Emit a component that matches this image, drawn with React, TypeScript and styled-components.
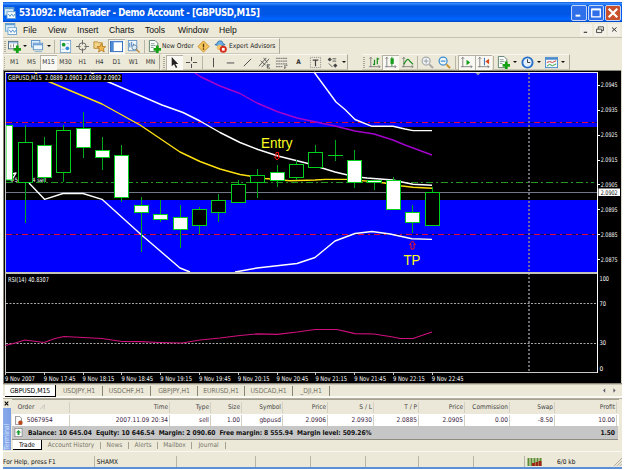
import React from "react";
import styled, { createGlobalStyle } from "styled-components";

const GlobalStyle = createGlobalStyle`
  body {
    margin: 0;
    background: #fff;
    overflow: hidden;
  }
  * {
    box-sizing: border-box;
  }
`;

const Frame = styled.div`
  width: 625px;
  height: 470px;
  padding: 2px 3px 1px;
  background: #fff;
  font-family: "DejaVu Sans Condensed", "DejaVu Sans", sans-serif;
  font-size: 6.5px;
  color: #111;
  white-space: pre;
`;

const Window = styled.div`
  display: flex;
  flex-direction: column;
  width: 619px;
  height: 467px;
  background: #ece9d8;
`;

const TitleBar = styled.div`
  display: flex;
  align-items: center;
  height: 20px;
  padding: 1px 1px 0 1px;
  background: linear-gradient(#0a5be0 0%, #3a8cff 8%, #0058e6 20%, #0055e5 60%, #0066ff 88%, #0043c0 100%);
`;

const Title = styled.h1`
  flex: 1;
  margin: 0 0 0 3px;
  font-size: 9.6px;
  letter-spacing: -0.4px;
  font-weight: bold;
  color: #fff;
`;

const CaptionButton = styled.div<{ $close?: boolean }>`
  display: flex;
  align-items: center;
  justify-content: center;
  width: 16px;
  height: 16px;
  margin-left: 1px;
  border: 1px solid #c4d6f8;
  border-radius: 2px;
  background: ${(p) => (p.$close ? "#c8512b" : "#2f6fea")};
`;

const MenuBar = styled.div`
  display: flex;
  align-items: center;
  height: 16px;
  padding: 0 2px;
  border-bottom: 1px solid #c5c2b4;
  font-family: "Liberation Sans", sans-serif;
  font-size: 8.6px;
`;

const MenuItem = styled.span<{ $w: number }>`
  width: ${(p) => p.$w}px;
`;

const MdiButton = styled.div`
  display: flex;
  align-items: center;
  justify-content: center;
  width: 12px;
  height: 12px;
  margin-left: 2px;
  background: #f4f2e8;
`;

const Bars = styled.div`
  display: flex;
  height: 16px;
`;

const ToolGroup = styled.div<{ $w: number; $ml?: number }>`
  display: flex;
  align-items: center;
  width: ${(p) => p.$w}px;
  margin-left: ${(p) => p.$ml || 0}px;
  height: 16px;
  border-top: 1px solid #f8f7f0;
  border-right: 1px solid #aca899;
  border-bottom: 1px solid #cbc8ba;
`;

const Grip = styled.i`
  width: 2px;
  height: 11px;
  margin: 0 1px;
  background: repeating-linear-gradient(#aca899 0 1px, #ece9d8 1px 2px);
`;

const Sep = styled.i<{ $m?: number }>`
  width: 1px;
  height: 13px;
  margin: 0 ${(p) => p.$m ?? 2}px;
  background: #b8b5a6;
`;

const Tool = styled.div<{ $w?: number; $on?: boolean }>`
  display: flex;
  flex: none;
  align-items: center;
  justify-content: center;
  width: ${(p) => p.$w || 17}px;
  height: 15px;
  color: #333;
  background: ${(p) => (p.$on ? "#f9f8f3" : "none")};
  box-shadow: ${(p) => (p.$on ? "inset 1px 1px #b5b2a4" : "none")};
`;

const ToolText = styled.span<{ $w: number }>`
  flex: none;
  width: ${(p) => p.$w}px;
  font-size: 6.6px;
  color: #222;
`;

const Caret = styled.i`
  width: 0;
  height: 0;
  border: 2px solid transparent;
  border-top: 2.5px solid #111;
  border-bottom: 0;
`;

const ChartSvg = styled.svg`
  display: block;
  flex: none;
  font-family: "DejaVu Sans Condensed", "DejaVu Sans", sans-serif;
`;

const ChartTabs = styled.div`
  display: flex;
  height: 16px;
  padding: 1px 8px 0 2px;
  border-top: 1px solid #8a8778;
  border-bottom: 1px solid #b4b1a1;
  background: linear-gradient(#c8c5b7 0 1px, #ece9d8 1px 12px, #faf9f2 12px);
  font-size: 6.8px;
  letter-spacing: -0.05px;
  color: #77746a;
`;

const ChartTab = styled.div<{ $w: number; $active?: boolean }>`
  display: flex;
  align-items: center;
  justify-content: center;
  width: ${(p) => p.$w}px;
  height: ${(p) => (p.$active ? 12 : 10)}px;
  color: ${(p) => (p.$active ? "#000" : "inherit")};
  background: ${(p) => (p.$active ? "#fff" : "none")};
  border-right: 1px solid ${(p) => (p.$active ? "#000" : "#8a8778")};
  border-bottom: ${(p) => (p.$active ? "1px solid #000" : "none")};
  margin-top: ${(p) => (p.$active ? 0 : 1)}px;
`;

const Scroll = styled.div`
  display: flex;
  gap: 5px;
  margin: 3px -3px 0 auto;
`;

const Terminal = styled.div`
  display: flex;
  height: 52px;
`;

const Side = styled.div`
  display: flex;
  flex-direction: column;
  width: 9px;
`;

const Close = styled.div`
  height: 9px;
  padding: 2px 0 0 1px;
  line-height: 0;
`;

const SideLabel = styled.div`
  flex: 1;
  width: 8px;
  margin-bottom: 1px;
  background: linear-gradient(90deg, #7b9fe6, #89a9ea);
  color: #d3e0fb;
  font-size: 7px;
  line-height: 8px;
  writing-mode: vertical-rl;
  transform: rotate(180deg);
`;

const Panel = styled.div`
  flex: 1;
`;

const Row = styled.div<{ $head?: boolean }>`
  display: flex;
  align-items: center;
  height: ${(p) => (p.$head ? 15 : 12)}px;
  border-top: ${(p) => (p.$head ? "1px solid #a5a294" : "none")};
  background: ${(p) => (p.$head ? "#ebe8d9" : "#fff")};
  color: ${(p) => (p.$head ? "#444" : "#3a1a3c")};
  margin-right: 3px;
`;

const Cell = styled.div<{ $w: number; $left?: boolean }>`
  display: flex;
  align-items: center;
  justify-content: ${(p) => (p.$left ? "flex-start" : "flex-end")};
  width: ${(p) => p.$w}px;
  height: 11px;
  padding: 0 1px 0 2px;
  border-right: 1px solid #d4d1c3;
`;

const Balance = styled.div`
  display: flex;
  align-items: center;
  height: 14px;
  margin-right: 4px;
  padding: 0 3px 0 2px;
  background: #c6c6c6;
  border-bottom: 1px solid #8f8d82;
  font-weight: bold;
  font-size: 6.7px;
  letter-spacing: -0.06px;
`;

const BalanceText = styled.span`
  flex: 1;
  margin-left: 3px;
`;

const BottomTabs = styled.div`
  display: flex;
  height: 11px;
  padding-left: 1px;
  color: #77746a;
`;

const BottomTab = styled.div<{ $w: number; $active?: boolean }>`
  display: flex;
  align-items: center;
  justify-content: center;
  width: ${(p) => p.$w}px;
  height: ${(p) => (p.$active ? 10 : 7)}px;
  margin-top: ${(p) => (p.$active ? 0 : 1.5)}px;
  color: ${(p) => (p.$active ? "#000" : "inherit")};
  background: ${(p) => (p.$active ? "#fff" : "none")};
  border-right: 1px solid ${(p) => (p.$active ? "#000" : "#a5a294")};
  border-bottom: ${(p) => (p.$active ? "1px solid #000" : "none")};
`;

const StatusBar = styled.div`
  display: flex;
  align-items: center;
  height: 16px;
  padding-top: 4px;
  border-top: 1px solid #f8f7f0;
`;

const StatusCell = styled.div<{ $w: number; $line?: boolean }>`
  display: flex;
  align-items: center;
  width: ${(p) => p.$w}px;
  height: 11px;
  border-right: ${(p) => (p.$line === false ? "none" : "1px solid #b8b5a6")};
`;

const BottomEdge = styled.div`
  height: 2px;
  background: #5b8fd8;
`;

const Ico = ({ children, size = 13 }: { children: React.ReactNode; size?: number }) => (
  <svg width={size} height={size} viewBox="0 0 14 14" fill="none">
    {children}
  </svg>
);

const AppLogo = () => (
  <Ico size={12}>
    <rect x="0.5" y="0.5" width="11" height="9" fill="#d6eafa" stroke="#5d9cd0" />
    <rect x="0.5" y="0.5" width="11" height="2" fill="#5d9cd0" />
    <rect x="3.5" y="5.5" width="10" height="8" fill="#fff" stroke="#5d9cd0" />
    <path d="M5 8l2 3 2-3 2 3 2-3" stroke="#3c86c4" />
  </Ico>
);

const plus = <path d="M10 6v8M6 10h8" stroke="#14a214" strokeWidth="3" />;

const NewChart = () => (
  <Ico>
    <rect x="0.5" y="1.5" width="10" height="8" fill="#fff" stroke="#4d6b8a" />
    <path d="M1 3h9" stroke="#6fa2d8" />
    <path d="M3 8V5M6 8V4" stroke="#888" />
    {plus}
  </Ico>
);

const Profiles = () => (
  <Ico>
    <rect x="0.5" y="0.5" width="9" height="7" fill="#dcecfb" stroke="#5c93c9" />
    <rect x="2.5" y="3.5" width="10" height="7" fill="#eef6fd" stroke="#5c93c9" />
    <path d="M3 5h9" stroke="#6fa2d8" strokeWidth="1.5" />
    <path d="M4 12.5h8" stroke="#8fb0d0" />
  </Ico>
);

const MarketWatch = () => (
  <Ico>
    <rect x="1.5" y="0.5" width="11" height="13" fill="#f5fbff" stroke="#7ba7d0" />
    <circle cx="5" cy="5" r="2" fill="#1a9a2a" />
    <circle cx="9" cy="9" r="2" fill="#3b8cd8" />
    <path d="M8 4h3M3 10h3" stroke="#a9c9e6" />
  </Ico>
);

const Target = () => (
  <Ico>
    <circle cx="7" cy="7" r="4" stroke="#666" />
    <path d="M7 0v5M7 9v5M0 7h5M9 7h5" stroke="#666" />
  </Ico>
);

const FolderStar = () => (
  <Ico>
    <path d="M1 2h4l1 1h4v6H1z" fill="#f4d488" stroke="#b98b35" />
    <path d="M9 4l1.3 3 3.4.3-2.5 2 .8 3.7-3-2-3 2 .8-3.7-2.5-2 3.4-.3z" fill="#f5b949" stroke="#a8701c" strokeWidth=".8" />
  </Ico>
);

const NavPanel = () => (
  <Ico>
    <rect x="0.5" y="1.5" width="13" height="11" fill="#fff" stroke="#2c67b5" />
    <path d="M1 2h12" stroke="#4d8bd8" />
    <rect x="1" y="2" width="3" height="10" fill="#4d8bd8" />
  </Ico>
);

const Tester = () => (
  <Ico>
    <rect x="1.5" y="0.5" width="9" height="11" fill="#eef5fc" stroke="#6c9ac8" />
    <path d="M3 3v5M5 2v5M7 4v3" stroke="#417db8" />
    <circle cx="8" cy="8" r="2.7" fill="#dcecfa" stroke="#5f7f9f" />
    <path d="M10 10l3.5 3.5" stroke="#c08a3a" strokeWidth="1.5" />
  </Ico>
);

const OrderIcon = () => (
  <Ico>
    <path d="M1.5.5h6l3 3v9h-9z" fill="#fff" stroke="#5c7d6c" />
    <path d="M3 4h4M3 6h5M3 8h3" stroke="#7c9a8c" />
    {plus}
  </Ico>
);

const Diamond = () => (
  <Ico>
    <path d="M7 1l6 6-6 6-6-6z" fill="#f8c860" stroke="#c98a26" />
    <path d="M7 4v4M7 9v1.5" stroke="#5b3b05" strokeWidth="1.5" />
  </Ico>
);

const Expert = () => (
  <Ico>
    <path d="M1 5q5 3 11 0l-2-1q-1-4-4-3-2 0-3 3z" fill="#6baee6" stroke="#3674ab" />
    <circle cx="6" cy="8" r="3" fill="#f0c46c" />
    <circle cx="10" cy="10" r="3.8" fill="#d52c1a" />
    <rect x="8.5" y="8.5" width="3" height="3" fill="#fff" />
  </Ico>
);

const axis = <path d="M3 1v11M1.5 3L3 1.5 4.500 3M1 11.5h12M11.500 10l1.500 1.500-1.500 1.500" stroke="#777" strokeWidth=".9" />;

const Magnifier = ({ color, inside }: { color: string; inside: string }) => (
  <Ico>
    <circle cx="5.5" cy="5.5" r="4.300" fill="#eef6fc" stroke={color} strokeWidth="1.3" />
    <path d={inside} stroke={color} strokeWidth="1.3" />
    <path d="M9 9l4 4" stroke={color === "#aaa" ? "#aaa" : "#c9962f"} strokeWidth="2.2" />
  </Ico>
);

const tabs: [string, number][] = [
  ["USDJPY,H1", 47],
  ["USDCHF,H1", 48],
  ["GBPJPY,H1", 47],
  ["EURUSD,H1", 47],
  ["USDCAD,H1", 48],
  ["_DJI,H1", 37],
];

const columns: [string, string, number][] = [
  ["Time", "2007.11.09 20:34", 100],
  ["Type", "sell", 41],
  ["Size", "1.00", 31],
  ["Symbol", "gbpusd", 41],
  ["Price", "2.0906", 45],
  ["S / L", "2.0930", 46],
  ["T / P", "2.0885", 45],
  ["Price", "2.0905", 46],
  ["Commission", "0.00", 45],
  ["Swap", "-8.50", 45],
  ["Profit", "10.00", 62],
];

// x, body top, body bottom, high, low, filled
const candles: [number, number, number, number, number, boolean][] = [
  [25, 142.5, 182.5, 125, 223, false],
  [44.5, 145.5, 177.5, 137, 183, true],
  [63.5, 130.5, 172.5, 125, 182, false],
  [83.5, 128.5, 147.5, 112, 158, true],
  [102.5, 150.5, 157.5, 137, 170, true],
  [121.5, 155.5, 197.5, 145, 202, true],
  [141.5, 205.5, 212.5, 197, 252, true],
  [160.5, 214.5, 219.5, 200, 222, true],
  [180.5, 217.5, 229.5, 205, 248, true],
  [199.5, 209.5, 225.5, 207, 234, false],
  [218.5, 200.5, 212.5, 194, 222, false],
  [238.5, 184.5, 202.5, 180, 202, false],
  [257.5, 175.5, 182.5, 169, 198, false],
  [277, 172.5, 180.5, 165, 187, true],
  [296.5, 164.5, 177.5, 160, 180, false],
  [315.5, 152.5, 167.5, 145, 167, false],
  [335.5, 155.5, 155.5, 140, 161, true],
  [354.5, 160.5, 182.5, 150, 188, true],
  [374.5, 180.5, 182.5, 180, 190, true],
  [393.5, 180.5, 209.5, 177, 209, true],
  [412.5, 212.5, 222.5, 205, 233, true],
  [432, 192.5, 225.5, 187, 225, false],
];

const prices: [string, number][] = [
  ["2.0945", 85],
  ["2.0935", 110],
  ["2.0925", 135],
  ["2.0915", 160],
  ["2.0905", 184.5],
  ["2.0895", 209.5],
  ["2.0885", 234.5],
  ["2.0875", 259.5],
];

const times = ["2007", "17:45", "18:15", "18:45", "19:15", "19:45", "20:15", "20:45", "21:15", "21:45", "22:15", "22:45"];

const Chart = () => (
  <ChartSvg width="619" height="313" viewBox="3 70 619 313" fill="none">
    <rect x="3" y="70" width="619" height="313" fill="#000" />
    <path d="M3 70.5H622M3.5 70V383" stroke="#8a8778" />
    <path d="M621.5 70V383" stroke="#d8d5c6" />
    <rect x="6" y="73" width="591" height="54" fill="#0000ff" />
    <rect x="6" y="200" width="591" height="72" fill="#0000ff" />

    <path d="M6 192.5H598" stroke="#70788a" />
    <path d="M6 182.5H594" stroke="#229a22" strokeDasharray="7 3 2 3" />
    {[122.5, 234.5].map((y) => (
      <g key={y}>
        <path d={`M6 ${y}H597`} stroke="#100070" />
        <path d={`M6 ${y}H597`} stroke="#e00838" strokeDasharray="6 4 2 4" />
      </g>
    ))}
    <path d="M529 73V372" stroke="#85858c" strokeWidth="1.6" strokeDasharray="2 2" />

    <g strokeWidth="1.4" strokeLinejoin="round">
      <path d="M34 72L45 80L102 104L140 125L180 152L200 161.5L220 169L240 174.5L265 178.5L290 180.7L315 180L325 179.4H347L380 182.3L400 185.7L413 187.3L432 188.3" stroke="#ffe010" />
      <path d="M90 72L105 80.5L140 95.5L162 105L183 112.5L200 121L220 132.5L240 142.5L258 149.5L278 156L308 163.5L322 168L335 172L355 176.7L367 178L393 180L402 182L413 184.3L432 185.3" stroke="#fff" />
      <path d="M314 72L336 102L345 109.5L355 119.5L372 126.3H393L405 129L413 130.6H432" stroke="#fff" />
      <path d="M195 73L200 76.5L220 86L240 93.5L257 103L277 111.5L297 118L335 126L355 131L374 134L393 140L405 145L432 155" stroke="#a400cc" />
      <path d="M12 174L16 173L13 178M29 183L44.5 199.3L63 193.5H83L102 199.3L141 234.5L180 268L190 272" stroke="#fff" />
      <path d="M235 272L257 268L297 263.5L315 257.5L335 241L355 233.5L372 231.5L390 234L412 238.7L432 239.4" stroke="#fff" />
    </g>
    <text x="10" y="182" fontSize="6" fill="#fff">#50</text>
    <text x="32" y="182" fontSize="6" fill="#fff">4 sell</text>

    <path d="M5.5 103V125" stroke="#00b414" />
    <rect x="6" y="125.5" width="6.5" height="54.5" fill="#fff" stroke="#00e01c" />
    {candles.map(([x, top, bottom, high, low, filled]) => (
      <g key={x} stroke="#00d01c">
        <path d={`M${Math.floor(x) + 0.5} ${high}V${low}`} stroke="#00a81c" />
        {top === bottom ? (
          <path d={`M${Math.floor(x) - 7} ${top}h15`} />
        ) : (
          <rect x={Math.floor(x) - 6.5} y={top} width="14" height={bottom - top} fill={filled ? "#fff" : "#000"} />
        )}
      </g>
    ))}

    <path d="M277 160l-2.5-3h1.500v-4.500h2.500v4.500h1.500z" stroke="#f01010" />
    <path d="M412.5 241l-3 3.5h1.500v4.500h3v-4.500h1.500z" stroke="#f01028" />
    <text x="261" y="148.3" fontFamily="Liberation Sans" fontSize="14.3" textLength="31.5" lengthAdjust="spacingAndGlyphs" fill="#ffff20">Entry</text>
    <text x="403.5" y="264.8" fontFamily="Liberation Sans" fontSize="14.3" textLength="17" lengthAdjust="spacingAndGlyphs" fill="#ffff20">TP</text>

    <rect x="7" y="74" width="115" height="8" fill="#000" />
    <text x="8" y="80" fontSize="6.6" textLength="113" lengthAdjust="spacingAndGlyphs" xmlSpace="preserve" fill="#fff">GBPUSD,M15  2.0889 2.0903 2.0889 2.0902</text>
    <path d="M475.5 73h5l-2.5 2.5z" fill="#8c96a8" />

    <path d="M5 72.5H598" stroke="#eef" />
    <path d="M5.5 72V372" stroke="#c8c8c8" />
    <rect x="5" y="272" width="593" height="2" fill="#c4c4b8" />
    <path d="M5 372.5H598" stroke="#c8c8c8" />
    <path d="M597.5 72V373" stroke="#fff" />

    <path d="M6 303.5H597M6 343.5H597" stroke="#a8a8a8" strokeDasharray="2 1.5" />
    <path d="M5.5 345.5L15 343L25 340L44 342.5L55 338.5L64 336.5L83 337.5L102 338.5L122 341.5L140 341.7L160 342.5L182 343L200 340L220 338L240 335.5L258 333.8L277 334.3L297 332L315 329.5H337L355 333.7L374 334L393 337L400 338.5H413L432 332" stroke="#d0107c" strokeWidth="1.2" />
    <text x="8" y="282" fontSize="6.6" textLength="41" lengthAdjust="spacingAndGlyphs" fill="#fff">RSI(14) 40.8307</text>

    {prices.map(([label, y]) => (
      <g key={label}>
        <path d={`M598 ${Math.floor(y) + 0.5}h2`} stroke="#fff" />
        <text x="600.7" y={y + 2.4} fontSize="6.3" textLength="17" lengthAdjust="spacingAndGlyphs" fill="#fff">{label}</text>
      </g>
    ))}
    <rect x="598.5" y="188.5" width="21.5" height="7.5" fill="#fff" />
    <text x="600.7" y="194.8" fontSize="6.3" textLength="17" lengthAdjust="spacingAndGlyphs" fill="#000">2.0902</text>
    <g fontSize="6.5" fill="#fff">
      <text x="599.5" y="280.5" textLength="9.5" lengthAdjust="spacingAndGlyphs">100</text>
      <text x="599.5" y="305.5" textLength="6.500" lengthAdjust="spacingAndGlyphs">70</text>
      <text x="599.5" y="345" textLength="6.500" lengthAdjust="spacingAndGlyphs">30</text>
      <text x="599.5" y="371">0</text>
    </g>
    {times.map((t, i) => (
      <g key={t}>
        <path d={`M${Math.round(5 + i * 38.8) + 0.5} 372v3`} stroke="#c8c8c8" />
        <text x={5 + i * 38.8} y="380.7" fontSize="6.5" textLength={i ? 31.8 : 29.8} lengthAdjust="spacingAndGlyphs" fill="#fff">{`9 Nov ${t}`}</text>
      </g>
    ))}
  </ChartSvg>
);

const App = () => (
  <>
    <GlobalStyle />
    <Frame>
      <Window>
        <TitleBar>
          <AppLogo />
          <Title>531092: MetaTrader - Demo Account - [GBPUSD,M15]</Title>
          <CaptionButton>
            <Ico size={11}><path d="M2 11h6" stroke="#fff" strokeWidth="2.5" /></Ico>
          </CaptionButton>
          <CaptionButton>
            <Ico size={12}>
              <rect x="2" y="2.5" width="10" height="9" stroke="#fff" strokeWidth="1.5" />
              <path d="M2 3h10" stroke="#fff" strokeWidth="2" />
            </Ico>
          </CaptionButton>
          <CaptionButton $close>
            <Ico size={12}><path d="M2 2l10 10M12 2L2 12" stroke="#fff" strokeWidth="2.5" /></Ico>
          </CaptionButton>
        </TitleBar>

        <MenuBar>
          <MenuItem $w={18}><AppLogo /></MenuItem>
          <MenuItem $w={25}>File</MenuItem>
          <MenuItem $w={29}>View</MenuItem>
          <MenuItem $w={32}>Insert</MenuItem>
          <MenuItem $w={36}>Charts</MenuItem>
          <MenuItem $w={33}>Tools</MenuItem>
          <MenuItem $w={41}>Window</MenuItem>
          <MenuItem $w={359}>Help</MenuItem>
          <MdiButton><Ico size={8}><path d="M3 11h6" stroke="#333" strokeWidth="2" /></Ico></MdiButton>
          <MdiButton>
            <Ico size={8}><path d="M4 5V1.5h9V8h-3M1 5.5h9v6H1z" stroke="#333" strokeWidth="1.5" /></Ico>
          </MdiButton>
          <MdiButton><Ico size={7}><path d="M2 3l9 8M11 3L2 11" stroke="#333" strokeWidth="2" /></Ico></MdiButton>
        </MenuBar>

        <Bars>
          <ToolGroup $w={277}>
            <Grip />
            <Tool $w={15}><NewChart /></Tool>
            <Tool $w={6}><Caret /></Tool>
            <Tool $w={18}><Profiles /></Tool>
            <Tool $w={6}><Caret /></Tool>
            <Sep />
            <Tool><MarketWatch /></Tool>
            <Tool><Target /></Tool>
            <Tool><FolderStar /></Tool>
            <Tool $on><NavPanel /></Tool>
            <Tool><Tester /></Tool>
            <Sep />
            <Tool $w={15}><OrderIcon /></Tool>
            <ToolText $w={33}>New Order</ToolText>
            <Tool><Diamond /></Tool>
            <Tool $w={17}><Expert /></Tool>
            <ToolText $w={48}>Expert Advisors</ToolText>
          </ToolGroup>
        </Bars>

        <Bars>
          <ToolGroup $w={157}>
            <Grip />
            {["M1", "M5", "M15", "M30", "H1", "H4", "D1", "W1", "MN"].map((p) => (
              <Tool key={p} $on={p === "M15"}>{p}</Tool>
            ))}
          </ToolGroup>
          <ToolGroup $w={186} $ml={2}>
            <Grip />
            <Tool $on><Ico><path d="M4 1v10l2.5-2 2 4 1.5-1-2-3.5h3z" fill="#222" /></Ico></Tool>
            <Tool><Ico><path d="M7 1v4.5M7 8.5V13M1 7h4.5M8.5 7H13" stroke="#444" /></Ico></Tool>
            <Sep />
            <Tool><Ico><path d="M7 2v10" stroke="#444" /></Ico></Tool>
            <Tool><Ico><path d="M3 7.5h8" stroke="#444" /></Ico></Tool>
            <Tool><Ico><path d="M3 11l8-8" stroke="#444" /></Ico></Tool>
            <Tool>
              <Ico><path d="M1 11l8-9M4 12l8-9M3 5l5 5M6 2l4 5M10 9.5h3M10 11h2M10 13h3M10 9v4" stroke="#555" /></Ico>
            </Tool>
            <Tool>
              <Ico><path d="M1 2.5h12M1 5.5h12M1 8.5h12M1 11.5h7M10.5 14v-4h3M10 12h2" stroke="#666" strokeDasharray="2 .5" /></Ico>
            </Tool>
            <Tool><b>A</b></Tool>
            <Tool>
              <Ico>
                <rect x="1.5" y="1.5" width="11" height="11" stroke="#888" strokeDasharray="1 1" />
                <path d="M4 4.5h6M7 4v7" stroke="#444" strokeWidth="1.3" />
              </Ico>
            </Tool>
            <Tool>
              <Ico>
                <path d="M4 1.5l2.300 2.300L4 6 1.700 3.800zM10 8l2.300 2.300L10 12.600 7.700 10.300z" fill="#444" />
                <path d="M3 8l4 4M7 3h4M7 5.500h4" stroke="#555" />
              </Ico>
            </Tool>
            <Tool $w={5}><Caret /></Tool>
          </ToolGroup>
          <ToolGroup $w={208} $ml={14}>
            <Grip />
            <Tool $w={16}><Ico>{axis}<path d="M7 4v6M10 2v7M7 9H5.500M10 3h2" stroke="#168c1a" strokeWidth="1.3" /></Ico></Tool>
            <Tool $on><Ico>{axis}<path d="M8.5 1v10" stroke="#168c1a" /><rect x="7" y="2.500" width="3.5" height="6" fill="#169c1a" /></Ico></Tool>
            <Tool><Ico>{axis}<path d="M3 9q4-8 6-4l4 4" stroke="#168c1a" strokeWidth="1.3" /></Ico></Tool>
            <Sep $m={1} />
            <Tool><Magnifier color="#aaa" inside="M3 5.5h5M5.5 3v5" /></Tool>
            <Tool><Magnifier color="#3c8ccc" inside="M3 5.5h5" /></Tool>
            <Sep />
            <Tool $on><Ico>{axis}<path d="M7 4l4 3-4 3z" fill="#16a01a" /></Ico></Tool>
            <Tool $on><Ico>{axis}<path d="M8 2v8" stroke="#2864b4" /><path d="M13 3v6L9 6z" fill="#d84818" /></Ico></Tool>
            <Sep $m={1} />
            <Tool><OrderIcon /></Tool>
            <Tool $w={6}><Caret /></Tool>
            <Tool $w={18}>
              <Ico><circle cx="7" cy="7" r="5.5" fill="#e4f1fd" stroke="#2a6fc8" strokeWidth="2" /><path d="M7 3.5V7h3" stroke="#333" /></Ico>
            </Tool>
            <Tool $w={6}><Caret /></Tool>
            <Tool $w={18}>
              <Ico>
                <rect x="0.5" y="1.5" width="13" height="11" fill="#f2f8fe" stroke="#4a8acb" />
                <path d="M1 3h12" stroke="#4a8acb" strokeWidth="2" />
                <path d="M2 7l3-1 3 1 4-2" stroke="#c8402c" />
                <path d="M2 11l3-2 3 1.5 4-2" stroke="#2a9c38" />
              </Ico>
            </Tool>
            <Tool $w={6}><Caret /></Tool>
          </ToolGroup>
        </Bars>

        <Chart />

        <ChartTabs>
          <ChartTab $w={51} $active>GBPUSD,M15</ChartTab>
          {tabs.map(([label, w]) => (
            <ChartTab key={label} $w={w}>{label}</ChartTab>
          ))}
          <Scroll>
            <Ico size={5}><path d="M9 1v12L3 7z" fill="#556" /></Ico>
            <Ico size={5}><path d="M4 1v12l6-6z" fill="#556" /></Ico>
          </Scroll>
        </ChartTabs>

        <Terminal>
          <Side>
            <Close><Ico size={5}><path d="M2 2l10 10M12 2L2 12" stroke="#000" strokeWidth="3" /></Ico></Close>
            <SideLabel>Terminal</SideLabel>
          </Side>
          <Panel>
            <Row $head>
              <Cell $w={58} $left>{"  Order   "}<Ico size={6}><path d="M1 12L10 2v10" stroke="#999" /></Ico></Cell>
              {columns.map(([head, , w], i) => (
                <Cell key={i} $w={w}>{head}</Cell>
              ))}
            </Row>
            <Row>
              <Cell $w={58} $left>
                <Ico size={9}>
                  <path d="M2.5.5h6l3 3v10h-9z" fill="#fff" stroke="#555" />
                  <circle cx="10" cy="10.5" r="3.5" fill="#b8481c" />
                </Ico>
                {"  5067954"}
              </Cell>
              {columns.map(([, value, w], i) => (
                <Cell key={i} $w={w}>{value}</Cell>
              ))}
            </Row>
            <Balance>
              <Ico size={9}>
                <rect x="1.5" y=".5" width="11" height="13" fill="#fff" stroke="#777" />
                <path d="M7 3l4 4H8.5v4h-3V7H3z" fill="#1c9c2c" />
              </Ico>
              <BalanceText>{" Balance: 10 645.04  Equity: 10 646.54  Margin: 2 090.60  Free margin: 8 555.94  Margin level: 509.26%"}</BalanceText>
              1.50
            </Balance>
            <BottomTabs>
              <BottomTab $w={29} $active>Trade</BottomTab>
              <BottomTab $w={59}>Account History</BottomTab>
              <BottomTab $w={28}>News</BottomTab>
              <BottomTab $w={29}>Alerts</BottomTab>
              <BottomTab $w={34}>Mailbox</BottomTab>
              <BottomTab $w={34}>Journal</BottomTab>
            </BottomTabs>
          </Panel>
        </Terminal>

        <StatusBar>
          <StatusCell $w={92}>For Help, press F1</StatusCell>
          <StatusCell $w={82}>{" SHAMX"}</StatusCell>
          <StatusCell $w={79} />
          <StatusCell $w={55} />
          <StatusCell $w={55} />
          <StatusCell $w={53} />
          <StatusCell $w={55} />
          <StatusCell $w={51} />
          <StatusCell $w={32} $line={false}>
            <svg width="17" height="8">
              <path d="M3.500 0v8M6.500 0v8M9.500 0v8M12.500 0v8M15.500 0v8" stroke="#5c8c32" strokeWidth="2" />
              <path d="M7 5h3v3h-3zM10.500 4h2.500v4h-2.500zM13.500 3h3v5h-3z" fill="#a02818" />
            </svg>
          </StatusCell>
          <StatusCell $w={57} $line={false}>6/0 kb</StatusCell>
          <Ico size={8}><path d="M0 14L14 0M5 14l9-9M10 14l4-4" stroke="#a5a294" strokeWidth="1.5" /></Ico>
        </StatusBar>
        <BottomEdge />
      </Window>
    </Frame>
  </>
);

export default App;
